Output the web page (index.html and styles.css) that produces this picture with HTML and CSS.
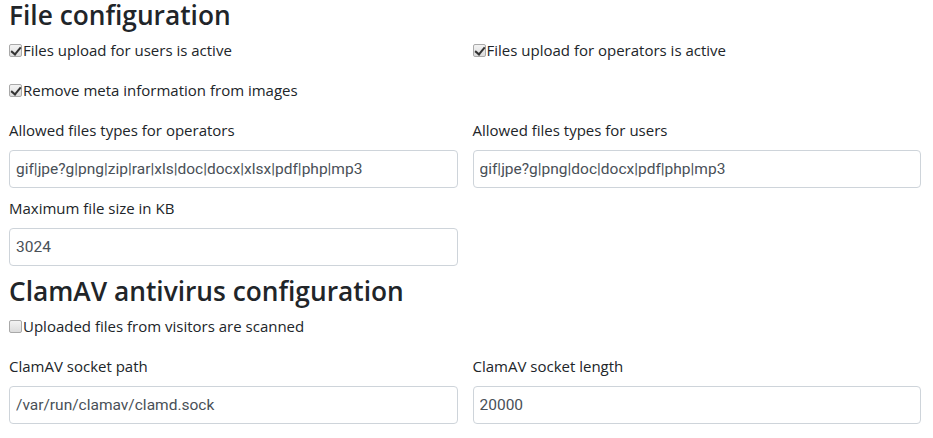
FILE: index.html
```html
<!DOCTYPE html>
<html lang="en">
<head>
<meta charset="utf-8">
<title>File configuration</title>
<link rel="stylesheet" href="styles.css">
</head>
<body>
<form class="page">
  <section class="section">
    <h2 class="title">File configuration</h2>
    <div class="checks">
      <label class="check"><input type="checkbox" class="box" checked>Files upload for users is active</label>
      <label class="check"><input type="checkbox" class="box" checked>Files upload for operators is active</label>
      <label class="check"><input type="checkbox" class="box" checked>Remove meta information from images</label>
    </div>
    <div class="fields">
      <div class="field">
        <label class="field-label">Allowed files types for operators</label>
        <input class="control" type="text" value="gif|jpe?g|png|zip|rar|xls|doc|docx|xlsx|pdf|php|mp3">
      </div>
      <div class="field">
        <label class="field-label">Allowed files types for users</label>
        <input class="control" type="text" value="gif|jpe?g|png|doc|docx|pdf|php|mp3">
      </div>
      <div class="field">
        <label class="field-label">Maximum file size in KB</label>
        <input class="control" type="text" value="3024">
      </div>
    </div>
  </section>
  <section class="section">
    <h2 class="title">ClamAV antivirus configuration</h2>
    <div class="checks">
      <label class="check"><input type="checkbox" class="box">Uploaded files from visitors are scanned</label>
    </div>
    <div class="fields">
      <div class="field">
        <label class="field-label">ClamAV socket path</label>
        <input class="control" type="text" value="/var/run/clamav/clamd.sock">
      </div>
      <div class="field">
        <label class="field-label">ClamAV socket length</label>
        <input class="control" type="text" value="20000">
      </div>
    </div>
  </section>
</form>
</body>
</html>
```

FILE: styles.css
```css
* { box-sizing: border-box; }

html, body {
  margin: 0;
  background: #ffffff;
}

body {
  font-family: "Open Sans", "Noto Sans", sans-serif;
  font-size: 15px;
  line-height: 24px;
  color: #212529;
}

.page {
  padding: 0 12px 0 9px;
  display: flex;
  flex-direction: column;
  gap: 10px;
}

.section {
  display: flex;
  flex-direction: column;
}

.title {
  margin: 0 0 8px;
  font-size: 26.3px;
  line-height: 30px;
  font-weight: 600;
  color: #212529;
}

.checks {
  display: grid;
  grid-template-columns: 1fr 1fr;
  column-gap: 15px;
  row-gap: 16px;
  margin-bottom: 16px;
}

.check {
  display: flex;
  align-items: center;
  height: 24px;
  white-space: nowrap;
}

.box {
  appearance: none;
  -webkit-appearance: none;
  position: relative;
  flex: none;
  width: 13px;
  height: 13px;
  margin: 0 1px 0 0;
  border: 1px solid #a9a9a9;
  border-radius: 2px;
  background: linear-gradient(#f3f3f3, #dcdcdc);
}

.box:checked::after {
  content: "";
  position: absolute;
  left: 3px;
  top: 0px;
  width: 4px;
  height: 8px;
  border: solid #333;
  border-width: 0 2px 2px 0;
  transform: rotate(40deg);
}

.fields {
  display: grid;
  grid-template-columns: 1fr 1fr;
  column-gap: 15px;
  row-gap: 8px;
}

.field {
  display: flex;
  flex-direction: column;
}

.field-label {
  display: block;
  margin-bottom: 8px;
}

.control {
  display: block;
  width: 100%;
  height: 38px;
  margin: 0;
  padding: 0 6px;
  font-family: Roboto, "Open Sans", sans-serif;
  font-size: 15.5px;
  color: #495057;
  background: #fff;
  border: 1px solid #ced4da;
  border-radius: 4px;
  outline: none;
}
```
